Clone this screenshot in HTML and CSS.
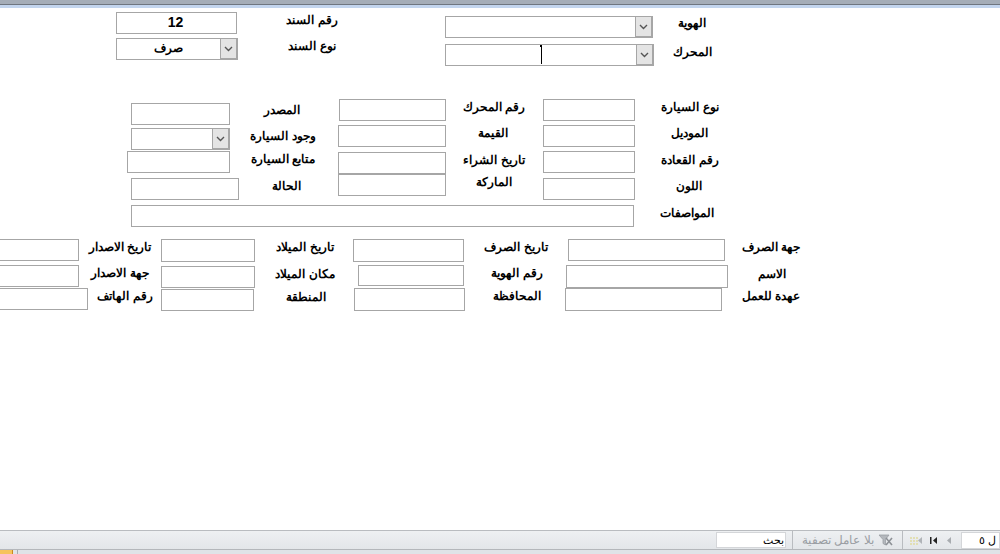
FILE: index.html
```html
<!DOCTYPE html>
<html lang="ar">
<head>
<meta charset="utf-8">
<title>نموذج</title>
<link rel="stylesheet" href="styles.css">
</head>
<body>
<header class="topbar"></header>
<main class="canvas">
  <div class="box f1">12</div><div class="lbl l1">رقم السند</div>
  <div class="box combo f2"><span class="val">صرف</span><span class="arrow"><svg width="9" height="6" viewBox="0 0 9 6"><path d="M1 1l3.500 3.500L8 1" fill="none" stroke="#555" stroke-width="1.400"/></svg></span></div><div class="lbl l2">نوع السند</div>
  <div class="box combo f3"><span class="val"></span><span class="arrow"><svg width="9" height="6" viewBox="0 0 9 6"><path d="M1 1l3.500 3.500L8 1" fill="none" stroke="#555" stroke-width="1.400"/></svg></span></div><div class="lbl l3">الهوية</div>
  <div class="box combo f4"><span class="val"></span><span class="arrow"><svg width="9" height="6" viewBox="0 0 9 6"><path d="M1 1l3.500 3.500L8 1" fill="none" stroke="#555" stroke-width="1.400"/></svg></span><i class="caret"></i></div><div class="lbl l4">المحرك</div>

  <div class="box f5"></div><div class="lbl l5">نوع السيارة</div>
  <div class="box f6"></div><div class="lbl l6">الموديل</div>
  <div class="box f7"></div><div class="lbl l7">رقم القعادة</div>
  <div class="box f8"></div><div class="lbl l8">اللون</div>
  <div class="box f9"></div><div class="lbl l9">رقم المحرك</div>
  <div class="box f10"></div><div class="lbl l10">القيمة</div>
  <div class="box f11"></div><div class="lbl l11">تاريخ الشراء</div>
  <div class="box f12"></div><div class="lbl l12">الماركة</div>
  <div class="box f13"></div><div class="lbl l13">المصدر</div>
  <div class="box combo f14"><span class="val"></span><span class="arrow"><svg width="9" height="6" viewBox="0 0 9 6"><path d="M1 1l3.500 3.500L8 1" fill="none" stroke="#555" stroke-width="1.400"/></svg></span></div><div class="lbl l14">وجود السيارة</div>
  <div class="box f15"></div><div class="lbl l15">متابع السيارة</div>
  <div class="box f16"></div><div class="lbl l16">الحالة</div>
  <div class="box f17"></div><div class="lbl l17">المواصفات</div>

  <div class="box f18"></div><div class="lbl l18">جهة الصرف</div>
  <div class="box f19"></div><div class="lbl l19">الاسم</div>
  <div class="box f20"></div><div class="lbl l20">عهدة للعمل</div>
  <div class="box f21"></div><div class="lbl l21">تاريخ الصرف</div>
  <div class="box f22"></div><div class="lbl l22">رقم الهوية</div>
  <div class="box f23"></div><div class="lbl l23">المحافظة</div>
  <div class="box f24"></div><div class="lbl l24">تاريخ الميلاد</div>
  <div class="box f25"></div><div class="lbl l25">مكان الميلاد</div>
  <div class="box f26"></div><div class="lbl l26">المنطقة</div>
  <div class="box f27"></div><div class="lbl l27">تاريخ الاصدار</div>
  <div class="box f28"></div><div class="lbl l28">جهة الاصدار</div>
  <div class="box f29"></div><div class="lbl l29">رقم الهاتف</div>
</main>
<footer class="nav">
  <div class="nav-row">
    <div class="search">بحث</div>
    <div class="filter"><span>بلا عامل تصفية</span><svg width="15" height="13" viewBox="0 0 15 13"><path d="M1 1h10L7.500 5.500V11L5 9.500V5.500z" fill="#b4b8bd" stroke="#9a9ea3" stroke-width=".8"/><path d="M8 4l6 7M14 4l-6 7" stroke="#8d9196" stroke-width="1.600"/></svg></div>
    <div class="pager">
      <svg class="ico" width="12" height="9" viewBox="0 0 12 9"><path d="M0 1h2v2H0zM3 1h2v2H3zM6 1h2v2H6zM0 4h2v2H0zM3 4h2v2H3zM6 4h2v2H6zM0 7h2v2H0zM3 7h2v2H3zM6 7h2v2H6z" fill="#e2dfb4"/><path d="M12 1v7L8 4.500z" fill="#b0b4b8"/></svg>
      <svg class="ico" width="8" height="9" viewBox="0 0 8 9"><path d="M0 1h1.500v7H0z" fill="#222"/><path d="M7 1v7L3 4.500z" fill="#222"/></svg>
      <svg class="ico" width="6" height="9" viewBox="0 0 6 9"><path d="M5 1v7L1 4.500z" fill="#a8acb0"/></svg>
      <div class="cur">ل ٥</div>
    </div>
  </div>
  <div class="status"><span class="tab"></span><span class="tab-sep"></span></div>
</footer>
</body>
</html>
```
FILE: styles.css
```css
html, body { margin: 0; padding: 0; }
body {
  width: 1000px; height: 554px; overflow: hidden; background: #fff;
  display: flex; flex-direction: column;
  font-family: "Liberation Sans", Arial, sans-serif; color: #000;
}
.topbar { height: 8px; flex: none; box-sizing: border-box; background: #a5adb8; border-bottom: 3px solid #c3d5ee; box-shadow: inset 0 -1px 0 #6f7680; }
.canvas { position: relative; flex: 1; }
.box { position: absolute; box-sizing: border-box; border: 1px solid #a6a6a6; background: #fff; text-align: center; font-size: 14px; font-weight: bold; line-height: 19px; }
.f1 { padding-right: 2px; }
.lbl { position: absolute; direction: rtl; white-space: nowrap; font-size: 12px; font-weight: bold; line-height: 16px; text-align: center; transform: translateX(50%); }
.combo { display: flex; direction: ltr; }
.combo .val { flex: 1; font-size: 12px; line-height: 18px; direction: rtl; }
.arrow { width: 17px; flex: none; box-sizing: border-box; border-left: 1px solid #a6a6a6; border-right: 1px solid #a6a6a6; border-bottom: 1px solid #a6a6a6; background: #e4e4e4; display: flex; align-items: center; justify-content: center; }
.caret { position: absolute; left: 95px; top: 0; width: 1px; height: 19px; background: #000; }
.caret::before { content: ""; position: absolute; left: -1px; top: 0; width: 1px; height: 2px; background: #000; }

.f1{left:116px;top:4px;width:121px;height:22px}
.f2{left:116px;top:30px;width:122px;height:22px}
.f3{left:445px;top:8px;width:208px;height:22px}
.f4{left:445px;top:36px;width:209px;height:22px}
.f5{left:543px;top:91px;width:92px;height:22px}
.f6{left:543px;top:117px;width:92px;height:22px}
.f7{left:543px;top:143px;width:92px;height:22px}
.f8{left:543px;top:170px;width:92px;height:22px}
.f9{left:339px;top:91px;width:107px;height:22px}
.f10{left:338px;top:117px;width:108px;height:22px}
.f11{left:338px;top:144px;width:108px;height:22px}
.f12{left:338px;top:166px;width:108px;height:22px}
.f13{left:131px;top:95px;width:99px;height:22px}
.f14{left:131px;top:120px;width:99px;height:22px}
.f15{left:127px;top:143px;width:103px;height:22px}
.f16{left:131px;top:170px;width:108px;height:22px}
.f17{left:131px;top:197px;width:503px;height:22px}
.f18{left:568px;top:231px;width:157px;height:22px}
.f19{left:566px;top:257px;width:162px;height:23px}
.f20{left:565px;top:280px;width:157px;height:23px}
.f21{left:353px;top:231px;width:111px;height:23px}
.f22{left:358px;top:257px;width:106px;height:21px}
.f23{left:354px;top:280px;width:111px;height:23px}
.f24{left:161px;top:231px;width:94px;height:23px}
.f25{left:161px;top:258px;width:94px;height:22px}
.f26{left:161px;top:281px;width:93px;height:22px}
.f27{left:-20px;top:231px;width:99px;height:22px}
.f28{left:-20px;top:257px;width:99px;height:22px}
.f29{left:-20px;top:280px;width:108px;height:22px}

.l1{right:688px;top:4px}
.l2{right:688px;top:30px}
.l3{right:308px;top:7px}
.l4{right:308px;top:36px}
.l5{right:310px;top:91px}
.l6{right:311px;top:117px}
.l7{right:310px;top:144px}
.l8{right:311px;top:170px}
.l9{right:506px;top:91px}
.l10{right:507px;top:117px}
.l11{right:506px;top:144px}
.l12{right:506px;top:166px}
.l13{right:718px;top:94px}
.l14{right:717px;top:120px}
.l15{right:717px;top:143px}
.l16{right:714px;top:170px}
.l17{right:313px;top:197px}
.l18{right:229px;top:231px}
.l19{right:228px;top:258px}
.l20{right:229px;top:280px}
.l21{right:484px;top:231px}
.l22{right:483px;top:257px}
.l23{right:483px;top:280px}
.l24{right:695px;top:231px}
.l25{right:695px;top:258px}
.l26{right:694px;top:281px}
.l27{right:880px;top:231px}
.l28{right:880px;top:257px}
.l29{right:875px;top:280px}

.nav { flex: none; height: 24px; background: #e9ecef; }
.nav-row { height: 19px; box-sizing: border-box; border-top: 1px solid #b9bcc0; background: linear-gradient(#eef0f2, #e3e6e9); display: flex; justify-content: flex-end; align-items: stretch; }
.search { width: 70px; margin: 1px 0; box-sizing: border-box; background: #fff; border: 1px solid #d4d6d9; font-size: 11px; line-height: 15px; text-align: right; padding-right: 1px; direction: rtl; }
.filter { width: 111px; box-sizing: border-box; margin-left: 6px; border-left: 1px solid #b9bcc0; border-right: 1px solid #b9bcc0; color: #9a9ea3; font-size: 11.5px; direction: ltr; display: flex; align-items: center; justify-content: center; gap: 4px; white-space: nowrap; }
.pager { width: 97px; display: flex; align-items: center; gap: 8px; padding-left: 7px; box-sizing: border-box; }
.ico { flex: none; }
.cur { flex: 1; margin: 1px 0 1px 1px; box-sizing: border-box; background: #fff; border: 1px solid #d4d6d9; font-size: 11px; line-height: 15px; direction: rtl; text-align: right; padding-right: 3px; white-space: nowrap; }
.status { height: 5px; box-sizing: border-box; background: #dfe3e7; border-top: 1px solid #b4b7bb; display: flex; align-items: stretch; }
.tab { width: 12px; background: #f6c35c; border-right: 1px solid #c98a1e; }
.tab-sep { width: 1px; margin-left: 4px; background: #a9adb2; }
```
